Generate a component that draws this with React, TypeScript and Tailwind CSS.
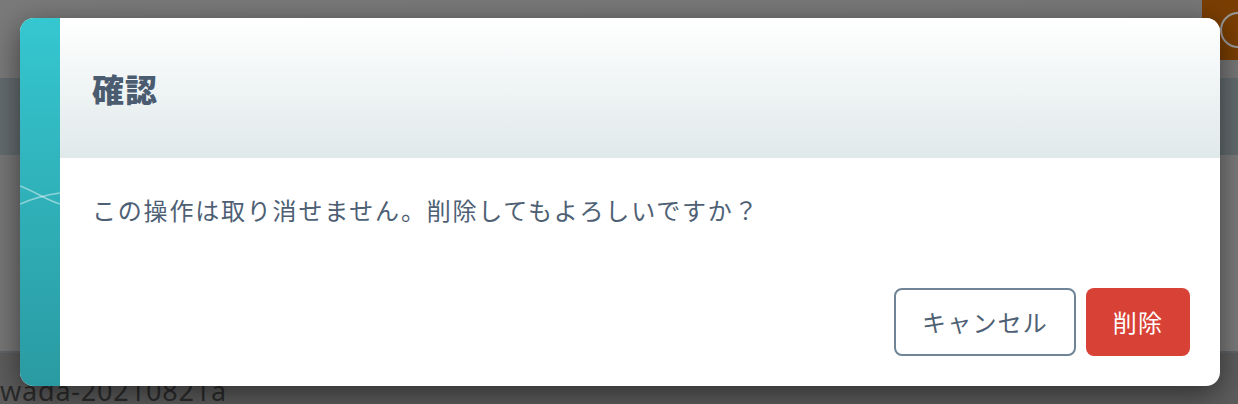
import React from "react";

const jp = { fontFamily: '"Noto Sans CJK JP", "Noto Sans", sans-serif' };

const ConfirmDialog = () => {
  return (
    <div className="flex w-full h-[368px] rounded-[14px] overflow-hidden bg-white shadow-[0_8px_30px_rgba(0,0,0,0.5)]">
      <div className="relative w-[40px] shrink-0 bg-gradient-to-b from-[#35c7d0] to-[#2a9aa2]">
        <svg
          className="absolute left-0 top-[150px]"
          width="40"
          height="40"
          viewBox="0 0 40 40"
        >
          <path
            d="M0 18 C 12 22, 26 32, 40 36"
            stroke="rgba(255,255,255,0.45)"
            strokeWidth="1.5"
            fill="none"
          />
          <path
            d="M0 36 C 14 30, 26 27, 40 25"
            stroke="rgba(255,255,255,0.45)"
            strokeWidth="1.5"
            fill="none"
          />
        </svg>
      </div>
      <div className="flex-1 flex flex-col">
        <div className="h-[140px] flex items-center pl-[32px] bg-gradient-to-b from-white to-[#e0e9ea]">
          <h2
            className="text-[32px] font-black tracking-[0.03em] text-[#4b5c70] leading-none"
            style={jp}
          >
            確認
          </h2>
        </div>
        <div className="flex-1 flex flex-col pl-[32px] pr-[30px] pt-[34px] pb-[30px]">
          <p
            className="text-[24px] leading-[36px] tracking-[0.075em] text-[#4e6074]"
            style={jp}
          >
            この操作は取り消せません。削除してもよろしいですか？
          </p>
          <div className="mt-auto flex justify-end gap-[10px]">
            <button
              className="w-[182px] h-[68px] rounded-[8px] border-2 border-[#6f8497] bg-white text-[24px] tracking-[0.05em] text-[#4e6074]"
              style={jp}
            >
              キャンセル
            </button>
            <button
              className="w-[104px] h-[68px] rounded-[8px] bg-[#d84136] text-[24px] tracking-[0.05em] text-white"
              style={jp}
            >
              削除
            </button>
          </div>
        </div>
      </div>
    </div>
  );
};

const App = () => {
  return (
    <div className="relative w-[1238px] h-[404px] overflow-hidden bg-[#747474]">
      {/* dimmed page behind the modal */}
      <div className="flex flex-col h-full">
        <div className="h-[80px] flex justify-end bg-gradient-to-r from-[#7a7a7a] to-[#777777]">
          <div className="relative w-[36px] h-[60px] bg-[#7a3e02] overflow-hidden">
            <div className="absolute left-[18px] top-[12px] w-[36px] h-[36px] rounded-full border-2 border-[#9a9a9a]" />
          </div>
        </div>
        <div className="h-[78px] bg-[#646c6f]" />
        <div className="h-[201px] bg-gradient-to-r from-[#777777] to-[#7b7b7b]" />
        <div className="h-[2px] bg-[#5f656a]" />
        <div className="flex-1 bg-[#5d5d5d] pt-[24px]">
          <p
            className="text-[27px] leading-none text-[#2c2c2c] tracking-[0.03em]"
            style={{ fontFamily: '"Noto Sans", sans-serif' }}
          >
            wada-20210821a
          </p>
        </div>
      </div>
      {/* modal overlay */}
      <div className="absolute inset-0 pl-[20px] pr-[18px] pt-[18px]">
        <ConfirmDialog />
      </div>
    </div>
  );
};

export default App;
